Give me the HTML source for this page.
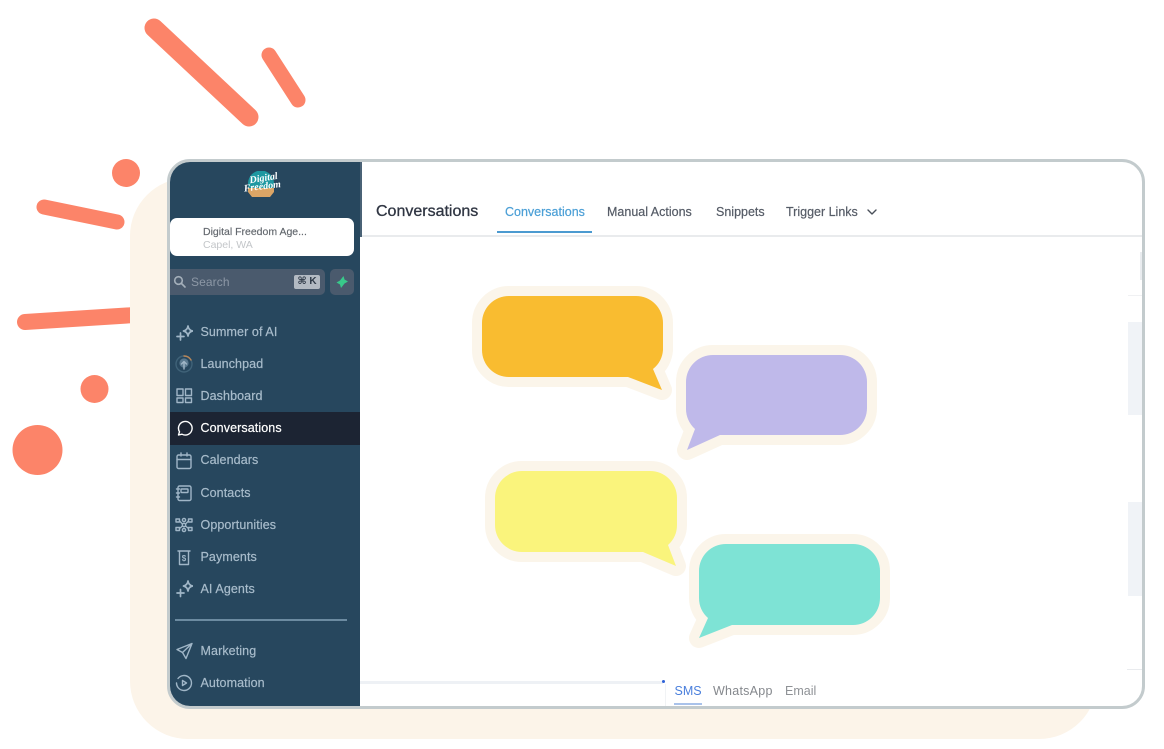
<!DOCTYPE html>
<html lang="en"><head><meta charset="utf-8"><title>Conversations</title>
<style>
html,body{margin:0;padding:0;background:#fff}
body{width:1164px;height:749px;position:relative;overflow:hidden;font-family:"Liberation Sans",sans-serif}
.abs,.t{position:absolute}
.t{white-space:nowrap;line-height:16px}
.cream{left:130px;top:178px;width:967px;height:561px;border-radius:58px;background:#fcf4e9}
.frame{left:167px;top:159px;width:978px;height:550px;box-sizing:border-box;border:3px solid #c3cbcd;border-radius:23px;background:#fff;overflow:hidden}
.inner{position:absolute;left:-170px;top:-162px;width:1164px;height:749px}
.side{left:170px;top:162px;width:190px;height:544px;background:#27475e}
.m{left:200.5px;font-size:12.5px;color:#a8bccb;letter-spacing:.1px;-webkit-text-stroke:.2px currentColor}
.ic{position:absolute;left:175px;width:18px;height:18px;fill:none;stroke:#a0b6c7;stroke-width:1.4;stroke-linecap:round;stroke-linejoin:round}
.tab{font-size:12.5px;color:#555b66;top:204px;-webkit-text-stroke:.2px currentColor}
</style></head><body>
<svg class="abs" style="left:0;top:0" width="1164" height="749" fill="#fc8469" stroke="#fc8469" stroke-linecap="round">
<line x1="154" y1="28" x2="249" y2="117" stroke-width="19"/>
<line x1="269" y1="55" x2="298" y2="100" stroke-width="15"/>
<line x1="44" y1="207" x2="117" y2="222" stroke-width="15"/>
<line x1="25" y1="322" x2="135" y2="315" stroke-width="16"/>
<circle cx="126" cy="173" r="14" stroke="none"/>
<circle cx="94.500" cy="389" r="14" stroke="none"/>
<circle cx="37.500" cy="450" r="25" stroke="none"/>
</svg>
<div class="abs cream"></div>
<div class="abs frame"><div class="inner">
 <div class="abs" style="left:360px;top:235px;width:790px;height:2px;background:#e9ebed"></div>
 <div class="abs" style="left:360px;top:162px;width:1.500px;height:75px;background:#4a6276"></div>
 <div class="abs side"></div>
 <div class="abs" style="left:360px;top:681px;width:303px;height:3px;background:#eef1f5"></div>
 <div class="abs" style="left:662px;top:680px;width:3px;height:3px;border-radius:50%;background:#2f62d8"></div>
 <div class="abs" style="left:665px;top:684px;width:1px;height:22px;background:#f1f3f5"></div>

 <div class="abs" style="left:1128px;top:322px;width:14px;height:93px;background:#f0f3f7"></div>
 <div class="abs" style="left:1128px;top:502px;width:14px;height:94px;background:#f0f3f7"></div>
 <div class="abs" style="left:1128px;top:295px;width:14px;height:1px;background:#f0f1f3"></div>
 <div class="abs" style="left:1127px;top:669px;width:15px;height:1px;background:#e9ebee"></div>
 <div class="abs" style="left:1140px;top:252px;width:2px;height:28px;background:#e9ecef"></div>

 <!-- logo -->
 <svg class="abs" style="left:243px;top:168px" width="38" height="32">
  <defs><clipPath id="c"><path d="M5 3 H31 V24 L27 29 H9 L5 24 Z"/></clipPath></defs>
  <g clip-path="url(#c)"><circle cx="18" cy="15.500" r="13" fill="#1f98a1"/><rect x="0" y="20" width="38" height="10" fill="#dba566"/></g>
  <g fill="#fff" font-family="Liberation Serif,serif" font-style="italic" font-weight="700">
   <text x="7" y="13.500" font-size="10" transform="rotate(-9 18 14)">Digital</text>
   <text x="1" y="21.500" font-size="10" transform="rotate(-7 18 21)">Freedom</text>
  </g>
 </svg>

 <!-- account card -->
 <div class="abs" style="left:170px;top:218px;width:184px;height:38px;background:#fff;border-radius:7px"></div>
 <div class="t" style="left:203px;top:224px;font-size:10.500px;color:#62676d;-webkit-text-stroke:.15px currentColor">Digital Freedom Age...</div>
 <div class="t" style="left:203px;top:237px;font-size:10.500px;color:#c3c6c9">Capel, WA</div>

 <!-- search -->
 <div class="abs" style="left:170px;top:269px;width:155px;height:26px;background:#4a5a6d;border-radius:0 5px 5px 0"></div>
 <svg class="abs" style="left:173px;top:275px" width="14" height="14" fill="none" stroke="#a4afba" stroke-width="1.600" stroke-linecap="round"><circle cx="5.500" cy="5.500" r="3.800"/><line x1="8.500" y1="8.500" x2="12" y2="12"/></svg>
 <div class="t" style="left:191px;top:274px;font-size:12px;color:#8d98a6;letter-spacing:.1px">Search</div>
 <div class="t" style="left:294px;top:275px;width:26px;height:14px;line-height:14px;background:#b3bac3;border-radius:2px;font-size:10px;color:#2f3a48;text-align:center;font-family:'Liberation Sans','DejaVu Sans',sans-serif;font-weight:700">⌘ K</div>
 <div class="abs" style="left:330px;top:269px;width:24px;height:26px;background:#4a5a6d;border-radius:5px"></div>
 <svg class="abs" style="left:335px;top:275px" width="14" height="14"><path d="M8.500 1 L9.500 4.500 L13 6.500 L9.500 8.500 L6 13 L5 9.500 L1.500 7.500 L5 5.500 Z" fill="#38c98a"/></svg>

 <!-- active row -->
 <div class="abs" style="left:170px;top:412px;width:190px;height:33px;background:#1c2433"></div>

 <!-- menu -->
 <div class="t m" style="top:324px">Summer of AI</div>
 <div class="t m" style="top:356px">Launchpad</div>
 <div class="t m" style="top:388px">Dashboard</div>
 <div class="t m" style="top:420px;color:#fff">Conversations</div>
 <div class="t m" style="top:452px">Calendars</div>
 <div class="t m" style="top:484.500px">Contacts</div>
 <div class="t m" style="top:516.500px">Opportunities</div>
 <div class="t m" style="top:549px">Payments</div>
 <div class="t m" style="top:581px">AI Agents</div>
 <div class="abs" style="left:175px;top:619px;width:172px;height:2px;background:#6c8ba1"></div>
 <div class="t m" style="top:642.500px">Marketing</div>
 <div class="t m" style="top:674.500px">Automation</div>

 <!-- icons -->
 <svg class="ic" style="top:325px" viewBox="0 0 18 18"><path d="M13 1 Q13.500 5 17.500 6 Q13.500 7 13 11 Q12.500 7 8.500 6 Q12.500 5 13 1 Z" stroke-width="1.700"/><path d="M5.500 8 V15 M2 11.500 H9" stroke-width="1.700"/></svg>
 <svg class="ic" style="top:355px" viewBox="0 0 18 18"><circle cx="9" cy="9" r="8" stroke="#3f6278"/><path d="M9 1 A8 8 0 0 1 16 5" stroke="#b98658"/><circle cx="9" cy="8" r="4.600" fill="#5b7a90" stroke="none"/><path d="M9 14 V7 M6.500 9 L9 6.500 L11.500 9" stroke="#a0b6c7"/></svg>
 <svg class="ic" style="top:387px" viewBox="0 0 18 18"><rect x="2" y="2" width="6" height="6.500"/><rect x="10.500" y="2" width="6" height="6.500"/><rect x="2" y="11" width="6" height="4.500"/><rect x="10.500" y="11" width="6" height="4.500"/></svg>
 <svg class="ic" style="top:419px;stroke:#fff" viewBox="0 0 18 18"><path d="M3.500 16 L4.500 12.800 A6.800 6.800 0 1 1 7 15.200 Z"/></svg>
 <svg class="ic" style="top:452px" viewBox="0 0 18 18"><rect x="2" y="3" width="14" height="13.500" rx="1.500"/><path d="M2 7.500 H16 M6 1 V4 M12 1 V4"/></svg>
 <svg class="ic" style="top:484px" viewBox="0 0 18 18"><rect x="3" y="2" width="13" height="14.500" rx="1.500"/><rect x="6" y="5" width="7" height="3.500" rx=".5"/><path d="M1.500 5 H4.500 M1.500 9 H4.500 M1.500 13 H4.500"/></svg>
 <svg class="ic" style="top:516px" viewBox="0 0 18 18" stroke-width="1.300"><circle cx="9" cy="4" r="1.600"/><circle cx="9" cy="9" r="1.700"/><circle cx="9" cy="14" r="1.600"/><rect x="1" y="3" width="3.500" height="3"/><rect x="13.500" y="3" width="3.500" height="3"/><rect x="1" y="11.500" width="3.500" height="3"/><rect x="13.500" y="11.500" width="3.500" height="3"/><path d="M4.500 5 L7.500 8 M13.500 5 L10.500 8 M4.500 12.500 L7.500 10 M13.500 12.500 L10.500 10"/></svg>
 <svg class="ic" style="top:548px" viewBox="0 0 18 18"><path d="M3 3 H15 M4.500 3 V16.500 H13.500 V3"/><text x="9" y="13" font-size="8" font-weight="700" text-anchor="middle" fill="#a0b6c7" stroke="none" font-family="Liberation Sans,sans-serif">$</text></svg>
 <svg class="ic" style="top:580px" viewBox="0 0 18 18"><path d="M13 1 Q13.500 5 17.500 6 Q13.500 7 13 11 Q12.500 7 8.500 6 Q12.500 5 13 1 Z" stroke-width="1.700"/><path d="M5.500 9.500 V16.500 M2 13 H9" stroke-width="1.700"/></svg>
 <svg class="ic" style="top:642px" viewBox="0 0 18 18"><path d="M17 1.500 L2 7.500 L7.500 10.500 L11 16.500 Z M7.500 10.500 L17 1.500"/></svg>
 <svg class="ic" style="top:674px" viewBox="0 0 18 18"><path d="M3 4.500 A7.500 7.500 0 1 1 3 13.500 A7.500 7.500 0 0 1 1.500 9"/><path d="M7.500 6.500 L11.500 9 L7.500 11.500 Z"/></svg>

 <!-- header -->
 <div class="t" style="left:376px;top:202.500px;font-size:16px;color:#2f3542;line-height:18px;-webkit-text-stroke:.3px currentColor">Conversations</div>
 <div class="t tab" style="left:505px;color:#4b9fd6">Conversations</div>
 <div class="abs" style="left:497px;top:231px;width:95px;height:2px;background:#4b9ad0"></div>
 <div class="t tab" style="left:607px">Manual Actions</div>
 <div class="t tab" style="left:716px">Snippets</div>
 <div class="t tab" style="left:786px">Trigger Links</div>
 <svg class="abs" style="left:866px;top:207px" width="12" height="10" fill="none" stroke="#4a505a" stroke-width="1.400" stroke-linecap="round" stroke-linejoin="round"><path d="M2 3 L6 7 L10 3"/></svg>

 <!-- bottom tabs -->
 <div class="t" style="left:674.500px;top:683px;font-size:12.500px;color:#4a7fdc">SMS</div>
 <div class="abs" style="left:674px;top:703px;width:28px;height:2px;background:#a9c2ea"></div>
 <div class="t" style="left:713px;top:683px;font-size:12.500px;color:#85888d;letter-spacing:.25px">WhatsApp</div>
 <div class="t" style="left:785px;top:683px;font-size:12.500px;color:#8f9296">Email</div>

 <!-- bubbles -->
 <svg class="abs" style="left:0;top:0" width="1164" height="749" stroke-linejoin="round">
  <g stroke="#fbf5ea" stroke-width="20" fill="#fbf5ea">
   <path d="M509 296 H636 A27 27 0 0 1 663 323 V350 A27 27 0 0 1 653 369 L662 390 L628 377 H509 A27 27 0 0 1 482 350 V323 A27 27 0 0 1 509 296 Z"/>
   <path d="M713 355 H840 A27 27 0 0 1 867 382 V408 A27 27 0 0 1 840 435 H720 L687 450 L695 429 A27 27 0 0 1 686 408 V382 A27 27 0 0 1 713 355 Z"/>
   <path d="M522 471 H650 A27 27 0 0 1 677 498 V525 A27 27 0 0 1 668 545 L676 566 L643 552 H522 A27 27 0 0 1 495 525 V498 A27 27 0 0 1 522 471 Z"/>
   <path d="M726 544 H853 A27 27 0 0 1 880 571 V598 A27 27 0 0 1 853 625 H732 L699 638 L708 618 A27 27 0 0 1 699 598 V571 A27 27 0 0 1 726 544 Z"/>
  </g>
  <path fill="#f9bc30" d="M509 296 H636 A27 27 0 0 1 663 323 V350 A27 27 0 0 1 653 369 L662 390 L628 377 H509 A27 27 0 0 1 482 350 V323 A27 27 0 0 1 509 296 Z"/>
  <path fill="#bfb9ea" d="M713 355 H840 A27 27 0 0 1 867 382 V408 A27 27 0 0 1 840 435 H720 L687 450 L695 429 A27 27 0 0 1 686 408 V382 A27 27 0 0 1 713 355 Z"/>
  <path fill="#faf47c" d="M522 471 H650 A27 27 0 0 1 677 498 V525 A27 27 0 0 1 668 545 L676 566 L643 552 H522 A27 27 0 0 1 495 525 V498 A27 27 0 0 1 522 471 Z"/>
  <path fill="#7ee3d5" d="M726 544 H853 A27 27 0 0 1 880 571 V598 A27 27 0 0 1 853 625 H732 L699 638 L708 618 A27 27 0 0 1 699 598 V571 A27 27 0 0 1 726 544 Z"/>
 </svg>
</div></div>
</body></html>
